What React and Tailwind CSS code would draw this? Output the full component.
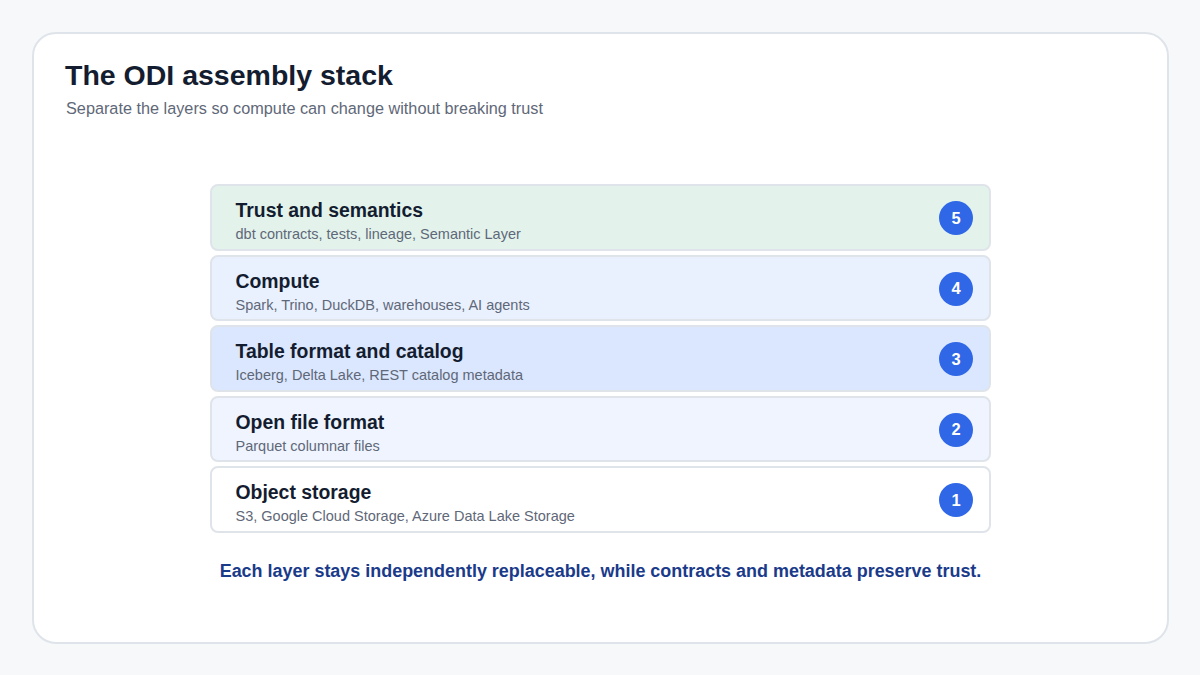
const layers = [
  { n: 5, title: "Trust and semantics", sub: "dbt contracts, tests, lineage, Semantic Layer", bg: "bg-[#e3f3ec]" },
  { n: 4, title: "Compute", sub: "Spark, Trino, DuckDB, warehouses, AI agents", bg: "bg-[#e9f0fe]" },
  { n: 3, title: "Table format and catalog", sub: "Iceberg, Delta Lake, REST catalog metadata", bg: "bg-[#dbe7fe]" },
  { n: 2, title: "Open file format", sub: "Parquet columnar files", bg: "bg-[#eff4ff]" },
  { n: 1, title: "Object storage", sub: "S3, Google Cloud Storage, Azure Data Lake Storage", bg: "bg-white" },
];

function Layer({ n, title, sub, bg }) {
  return (
    <div className={`flex h-[66.5px] items-center justify-between rounded-[8px] border-2 border-[#dfe4ea] pl-[23.5px] pr-[16px] ${bg}`}>
      <div className="pt-[6.5px]">
        <div className="text-[19.4px] leading-[24px] font-bold text-[#141d30]">{title}</div>
        <div className="mt-[4px] text-[14.5px] leading-[17px] text-[#5f6878]">{sub}</div>
      </div>
      <div className="mt-[2px] flex h-[34px] w-[34px] items-center justify-center rounded-full bg-[#2f67e6] text-[16.5px] font-bold text-white">
        {n}
      </div>
    </div>
  );
}

export default function App() {
  return (
    <div className="h-[675px] w-[1200px] overflow-hidden bg-[#f6f8fa] p-[32px] font-['Liberation_Sans',sans-serif]">
      <div className="h-[612px] w-[1137px] rounded-[24px] border-2 border-[#dfe4ea] bg-white pt-[23px]">
        <h1 className="ml-[31px] text-[28.5px] leading-[36px] font-bold text-[#141d30]">The ODI assembly stack</h1>
        <p className="ml-[32px] mt-[3px] text-[16.25px] leading-[24px] text-[#5f6878]">
          Separate the layers so compute can change without breaking trust
        </p>
        <div className="ml-[176px] flex w-[781px] flex-col gap-[4px] pt-[64px]">
          {layers.map((l) => (
            <Layer key={l.n} {...l} />
          ))}
        </div>
        <p className="mt-[26px] ml-[176px] w-[781px] whitespace-nowrap text-center text-[17.95px] leading-[24px] font-bold text-[#1a3a8a]">
          Each layer stays independently replaceable, while contracts and metadata preserve trust.
        </p>
      </div>
    </div>
  );
}
